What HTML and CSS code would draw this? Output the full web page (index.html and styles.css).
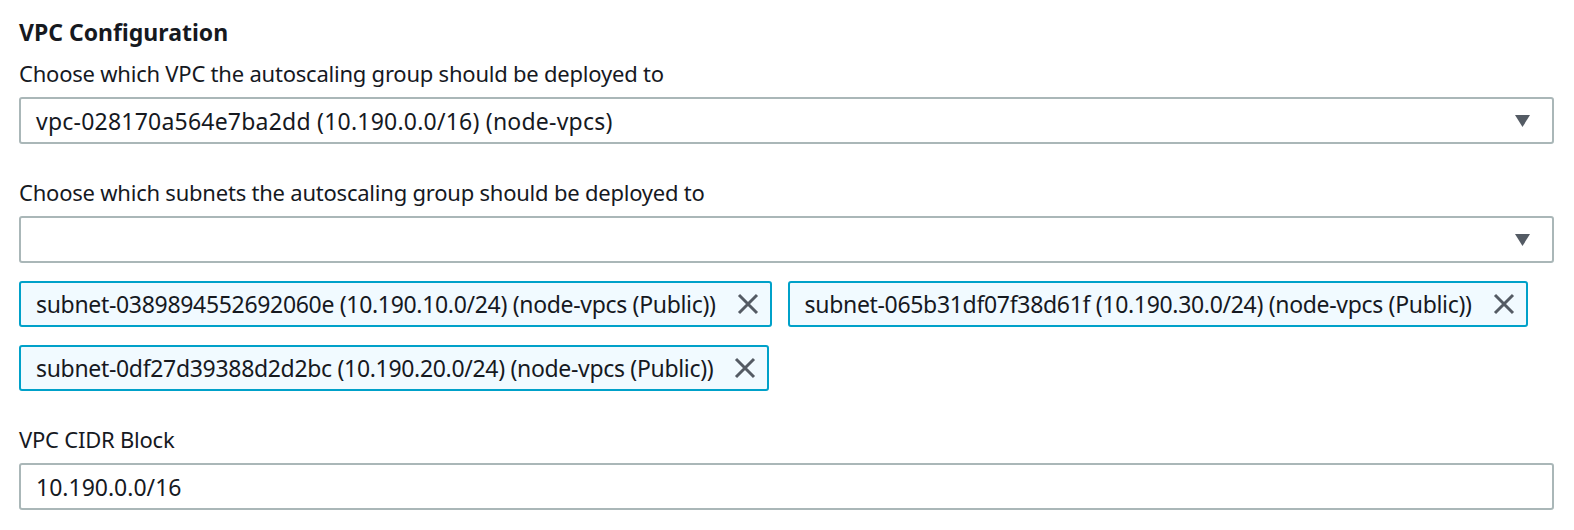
FILE: index.html
```html
<!DOCTYPE html>
<html>
<head>
<meta charset="utf-8">
<link rel="stylesheet" href="styles.css">
</head>
<body>
<div class="form">
  <h2 class="title">VPC Configuration</h2>
  <div class="field first">
    <div class="label">Choose which VPC the autoscaling group should be deployed to</div>
    <div class="select">
      <span class="value">vpc-028170a564e7ba2dd (10.190.0.0/16) (node-vpcs)</span>
      <svg class="caret" width="15" height="12" viewBox="0 0 15 12"><path d="M0 0 H15 L7.5 12 Z" fill="#545b64"/></svg>
    </div>
  </div>
  <div class="field">
    <div class="label">Choose which subnets the autoscaling group should be deployed to</div>
    <div class="select">
      <span class="value"></span>
      <svg class="caret" width="15" height="12" viewBox="0 0 15 12"><path d="M0 0 H15 L7.5 12 Z" fill="#545b64"/></svg>
    </div>
    <div class="chips">
      <div class="chip"><span>subnet-0389894552692060e (10.190.10.0/24) (node-vpcs (Public))</span><svg class="x" width="22" height="22" viewBox="0 0 22 22"><path d="M2 2 L20 20 M20 2 L2 20" stroke="#545b64" stroke-width="3"/></svg></div>
      <div class="chip"><span>subnet-065b31df07f38d61f (10.190.30.0/24) (node-vpcs (Public))</span><svg class="x" width="22" height="22" viewBox="0 0 22 22"><path d="M2 2 L20 20 M20 2 L2 20" stroke="#545b64" stroke-width="3"/></svg></div>
      <div class="chip"><span>subnet-0df27d39388d2d2bc (10.190.20.0/24) (node-vpcs (Public))</span><svg class="x" width="22" height="22" viewBox="0 0 22 22"><path d="M2 2 L20 20 M20 2 L2 20" stroke="#545b64" stroke-width="3"/></svg></div>
    </div>
  </div>
  <div class="field">
    <div class="label">VPC CIDR Block</div>
    <div class="select">
      <span class="value cidr">10.190.0.0/16</span>
    </div>
  </div>
</div>
</body>
</html>
```
FILE: styles.css
```css
html, body {
  margin: 0;
  padding: 0;
  background: #ffffff;
}
body {
  font-family: "Noto Sans", "Open Sans", sans-serif;
  color: #16191f;
}
.form {
  width: 1535px;
  padding: 17px 0 0 19px;
  display: flex;
  flex-direction: column;
}
.title {
  margin: 0;
  font-size: 23px;
  font-weight: 700;
  line-height: 30px;
}
.field {
  display: flex;
  flex-direction: column;
  margin-top: 33px;
}
.field.first {
  margin-top: 11px;
}
.label {
  font-size: 22px;
  line-height: 30px;
  letter-spacing: -0.22px;
  margin-bottom: 9px;
}
.select {
  box-sizing: border-box;
  height: 47px;
  border: 2px solid #aab7b8;
  border-radius: 3px;
  display: flex;
  align-items: center;
  justify-content: space-between;
  padding: 0 22px 0 15px;
  font-size: 23px;
}
.value {
  letter-spacing: 0.22px;
}
.value.cidr {
  letter-spacing: 0;
}
.chips {
  display: flex;
  flex-wrap: wrap;
  gap: 18px 16px;
  margin-top: 18px;
}
.chip {
  box-sizing: border-box;
  height: 46px;
  border: 2px solid #00a1c9;
  background: #f1faff;
  border-radius: 3px;
  display: flex;
  align-items: center;
  gap: 21px;
  padding: 0 11px 0 15px;
  font-size: 23px;
  letter-spacing: -0.32px;
}
.x {
  display: block;
}
```
